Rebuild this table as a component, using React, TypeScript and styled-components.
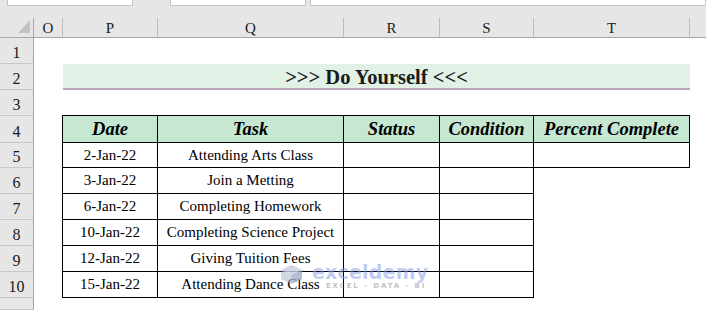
import React from "react";
import styled, { createGlobalStyle, css } from "styled-components";

const GlobalStyle = createGlobalStyle`
  html, body { margin: 0; padding: 0; background: #fff; }
  body {
    font-family: "Liberation Serif", "Times New Roman", serif;
    width: 706px; height: 310px; overflow: hidden;
  }
`;

const Sheet = styled.div`
  position: relative;
  display: grid;
  width: 706px;
  height: 310px;
  grid-template-columns: 34px 29px 95px 186px 96px 94px 156px 1fr;
  grid-template-rows: 18px 20px 26px 26px 26px 27px 25px 26px 26px 26px 26px 26px 1fr;
  background: #fff;
  overflow: hidden;
`;

const TopStrip = styled.div`
  grid-column: 1 / -1;
  display: flex;
  align-items: flex-start;
  background: #e6e6e6;
  padding-left: 7px;
`;

const Field = styled.div<{ $w?: number; $ml?: number }>`
  box-sizing: border-box;
  height: 6px;
  background: #fff;
  border: 1px solid #c6c6c6;
  border-top: none;
  margin-left: ${(p) => p.$ml ?? 0}px;
  ${(p) => (p.$w ? css`width: ${p.$w}px; flex: none;` : css`flex: 1;`)}
`;

const Corner = styled.div`
  box-sizing: border-box;
  background: #e6e6e6;
  border-right: 1px solid #a8a8a8;
  border-bottom: 1px solid #a8a8a8;
  display: flex;
  align-items: flex-end;
  justify-content: flex-end;
  padding: 0 3px 4px 0;
`;

const Triangle = styled.div`
  width: 0;
  height: 0;
  border-left: 12px solid transparent;
  border-bottom: 13px solid #c2c2c2;
`;

const ColHeader = styled.div<{ $last?: boolean }>`
  box-sizing: border-box;
  background: #e6e6e6;
  border-right: ${(p) => (p.$last ? "none" : "1px solid #bdbdbd")};
  border-bottom: 1px solid #a8a8a8;
  display: flex;
  align-items: center;
  justify-content: center;
  font-size: 15px;
  color: #1a1a1a;
  padding-top: 1px;
`;

const RowHeader = styled.div`
  box-sizing: border-box;
  background: #e6e6e6;
  border-right: 1px solid #a8a8a8;
  border-bottom: 1px solid #c8c8c8;
  display: flex;
  align-items: flex-end;
  justify-content: center;
  font-size: 16px;
  line-height: 20px;
  color: #1a1a1a;
`;

const Blank = styled.div<{ $span?: number }>`
  grid-column: span ${(p) => p.$span ?? 1};
  background: #fff;
`;

const Title = styled.div`
  grid-column: span 5;
  box-sizing: border-box;
  background: #e2f1e6;
  border-bottom: 2px solid #bca6b7;
  display: flex;
  align-items: center;
  justify-content: center;
  padding-top: 2px;
  font-size: 20.5px;
  font-weight: bold;
  color: #1b1b1b;
  white-space: nowrap;
`;

const Cell = styled.div<{ $top?: boolean; $left?: boolean; $head?: boolean }>`
  box-sizing: border-box;
  display: flex;
  align-items: center;
  justify-content: center;
  white-space: nowrap;
  color: #000;
  background: ${(p) => (p.$head ? "#c6e7d2" : "#fff")};
  border-right: 1px solid #000;
  border-bottom: 1px solid #000;
  font-size: ${(p) => (p.$head ? "18.5px" : "15px")};
  font-weight: ${(p) => (p.$head ? "bold" : "normal")};
  font-style: ${(p) => (p.$head ? "italic" : "normal")};
  box-shadow: ${(p) =>
    [
      p.$top ? "0 -1px 0 #000" : "",
      p.$left ? "-1px 0 0 #000" : "",
      p.$top && p.$left ? "-1px -1px 0 #000" : "",
    ]
      .filter(Boolean)
      .join(", ") || "none"};
`;

const Watermark = styled.div`
  position: absolute;
  left: 281px;
  top: 265px;
  display: flex;
  align-items: flex-start;
  gap: 10px;
  pointer-events: none;
`;

const MarkText = styled.div`
  display: flex;
  flex-direction: column;
  align-items: center;
  margin-top: -3px;
`;

const MarkName = styled.div`
  font-family: "DejaVu Sans", "Noto Sans", sans-serif;
  font-weight: bold;
  font-size: 19px;
  line-height: 20px;
  letter-spacing: 0.2px;
  color: rgba(130, 150, 230, 0.5);
`;

const MarkSub = styled.div`
  font-family: "DejaVu Sans", "Noto Sans", sans-serif;
  font-weight: bold;
  font-size: 7px;
  line-height: 8px;
  letter-spacing: 1.9px;
  color: rgba(130, 130, 130, 0.5);
  margin-left: 12px;
`;

const LogoIcon = () => (
  <svg width="21" height="19" viewBox="0 0 21 19">
    <path d="M10.5 0 L21 5 L21 14 L10.5 19 L0 14 L0 5 Z" fill="rgba(165,175,205,0.5)" />
    <path d="M10.5 0 L21 5 L10.5 10 L0 5 Z" fill="rgba(210,216,235,0.6)" />
    <path d="M10.5 10 L21 5 L21 14 L10.5 19 Z" fill="rgba(145,155,190,0.45)" />
  </svg>
);

const columns = ["O", "P", "Q", "R", "S", "T"];

const tasks: [string, string][] = [
  ["2-Jan-22", "Attending Arts Class"],
  ["3-Jan-22", "Join a Metting"],
  ["6-Jan-22", "Completing Homework"],
  ["10-Jan-22", "Completing Science Project"],
  ["12-Jan-22", "Giving Tuition Fees"],
  ["15-Jan-22", "Attending Dance Class"],
];

const heads = ["Date", "Task", "Status", "Condition", "Percent Complete"];

export default function App() {
  return (
    <>
      <GlobalStyle />
      <Sheet>
        <TopStrip>
          <Field $w={126} />
          <Field $w={136} $ml={37} />
          <Field $ml={4} />
        </TopStrip>

        <Corner>
          <Triangle />
        </Corner>
        {columns.map((c) => (
          <ColHeader key={c}>{c}</ColHeader>
        ))}
        <ColHeader $last />

        <RowHeader>1</RowHeader>
        <Blank $span={7} />

        <RowHeader>2</RowHeader>
        <Blank />
        <Title>&gt;&gt;&gt; Do Yourself &lt;&lt;&lt;</Title>
        <Blank />

        <RowHeader>3</RowHeader>
        <Blank $span={7} />

        <RowHeader>4</RowHeader>
        <Blank />
        {heads.map((h, i) => (
          <Cell key={h} $head $top $left={i === 0}>
            {h}
          </Cell>
        ))}
        <Blank />

        {tasks.map(([d, t], i) => (
          <React.Fragment key={d}>
            <RowHeader>{i + 5}</RowHeader>
            <Blank />
            <Cell $left>{d}</Cell>
            <Cell>{t}</Cell>
            <Cell />
            <Cell />
            {i === 0 ? (
              <>
                <Cell />
                <Blank />
              </>
            ) : (
              <Blank $span={2} />
            )}
          </React.Fragment>
        ))}

        <RowHeader />
        <Blank $span={7} />

        <Watermark>
          <LogoIcon />
          <MarkText>
            <MarkName>exceldemy</MarkName>
            <MarkSub>EXCEL - DATA - BI</MarkSub>
          </MarkText>
        </Watermark>
      </Sheet>
    </>
  );
}
